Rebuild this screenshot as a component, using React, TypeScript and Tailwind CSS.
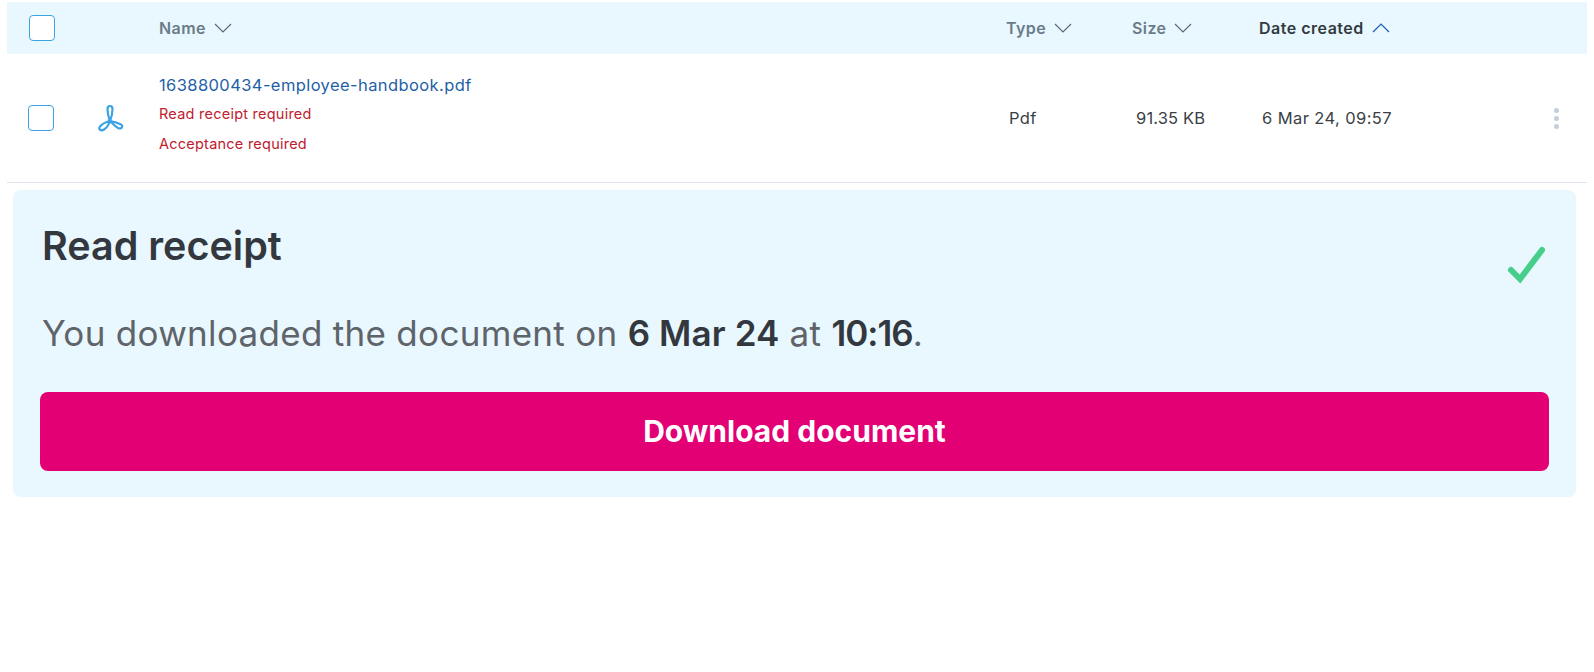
import React from 'react';

const HeaderCell = ({ label, active, className }: { label: string; active?: boolean; className: string }) => (
  <div className={`flex items-center gap-[8px] ${className}`}>
    <span className={`text-[16px] font-semibold ${active ? 'text-[#333a40] tracking-[0.5px] ml-[1px]' : 'text-[#6b7c88] tracking-[0.4px]'}`}>{label}</span>
    <svg width="18" height="10" viewBox="0 0 18 10" fill="none" strokeWidth="1.2" stroke={active ? '#1a5fa8' : '#5d6b76'}>
      <path d={active ? 'M1 9 L9 1 L17 9' : 'M1 1 L9 9 L17 1'} />
    </svg>
  </div>
);

const Checkbox = () => <div className="w-[26px] h-[26px] rounded-[4px] border border-[#3ba3e4] bg-white" />;

const PdfIcon = () => (
  <svg width="30" height="28" viewBox="0 0 30 28" fill="none" stroke="#3ba3e4" strokeWidth="2.2">
    <path d="M14 17 C12 12 11.5 8 11.5 5 C11.5 1 16.5 1 16.5 5 C16.5 8 16 12 14 17 Z" />
    <path d="M14 17 C10 18 6 20 4 22.5 C2 25.5 5 27.5 8 25.5 C10.5 24 13 20 14 17 Z" />
    <path d="M14 17 C17 20 19 22.5 22 24 C26 25.5 27.5 22 25 20.5 C22 19 18 17.5 14 17 Z" />
  </svg>
);

export default function App() {
  return (
    <div className="w-full h-[672px] bg-white font-['Inter',sans-serif] pt-[2px] pl-[7px] pr-[7px]">
      {/* Header */}
      <div className="flex items-center h-[52px] bg-[#e9f7ff]">
        <div className="w-[152px] pl-[22px]">
          <Checkbox />
        </div>
        <HeaderCell label="Name" className="w-[847px]" />
        <HeaderCell label="Type" className="w-[126px]" />
        <HeaderCell label="Size" className="w-[126px]" />
        <HeaderCell label="Date created" active className="flex-1" />
      </div>

      {/* Row */}
      <div className="flex items-center h-[129px] border-b border-[#dde3ec] text-[16.5px] tracking-[0.4px] text-[#3a3f45]">
        <div className="w-[89px] pl-[21px]">
          <Checkbox />
        </div>
        <div className="w-[63px]">
          <PdfIcon />
        </div>
        <div className="w-[850px] flex flex-col -mt-[4px]">
          <span className="text-[#1f5fa6] leading-[24px]">1638800434-employee-handbook.pdf</span>
          <span className="text-[#c0202e] text-[14.5px] tracking-[0.24px] leading-[30px] mt-[2px]">Read receipt required</span>
          <span className="text-[#c0202e] text-[14.5px] tracking-[0.24px] leading-[30px]">Acceptance required</span>
        </div>
        <div className="w-[127px]">Pdf</div>
        <div className="w-[126px] tracking-[0.15px]">91.35 KB</div>
        <div className="flex-1">6 Mar 24, 09:57</div>
        <div className="flex flex-col gap-[3px] mr-[28px]">
          <span className="w-[5px] h-[5px] rounded-full bg-[#c3ced8]" />
          <span className="w-[5px] h-[5px] rounded-full bg-[#c3ced8]" />
          <span className="w-[5px] h-[5px] rounded-full bg-[#c3ced8]" />
        </div>
      </div>

      {/* Read receipt panel */}
      <div className="mt-[7px] ml-[6px] mr-[11px] rounded-[8px] bg-[#e9f7ff] pt-[31px] pl-[27px] pr-[27px] pb-[26px]">
        <div className="flex justify-between items-start">
          <h2 className="ml-[2px] text-[39.5px] leading-[50px] font-semibold text-[#33383e]">Read receipt</h2>
          <svg width="40" height="40" viewBox="0 0 40 40" fill="none" stroke="#45cf8b" strokeWidth="6" strokeLinecap="round" className="mt-[24px] mr-[4px]">
            <path d="M6 25 L15 34 L37 5" />
          </svg>
        </div>
        <p className="ml-[2px] mt-[25px] text-[35px] tracking-[0.3px] leading-[46px] text-[#5e6469]">
          You downloaded the document on <b className="font-semibold tracking-[0.12px] text-[#33383e]">6 Mar 24</b> at{' '}
          <b className="font-semibold tracking-[-1px] text-[#33383e]">10:16</b>.
        </p>
        <button className="mt-[36px] block w-full h-[79px] rounded-[8px] bg-[#e20074] text-white text-[30px] font-bold">
          Download document
        </button>
      </div>
    </div>
  );
}
